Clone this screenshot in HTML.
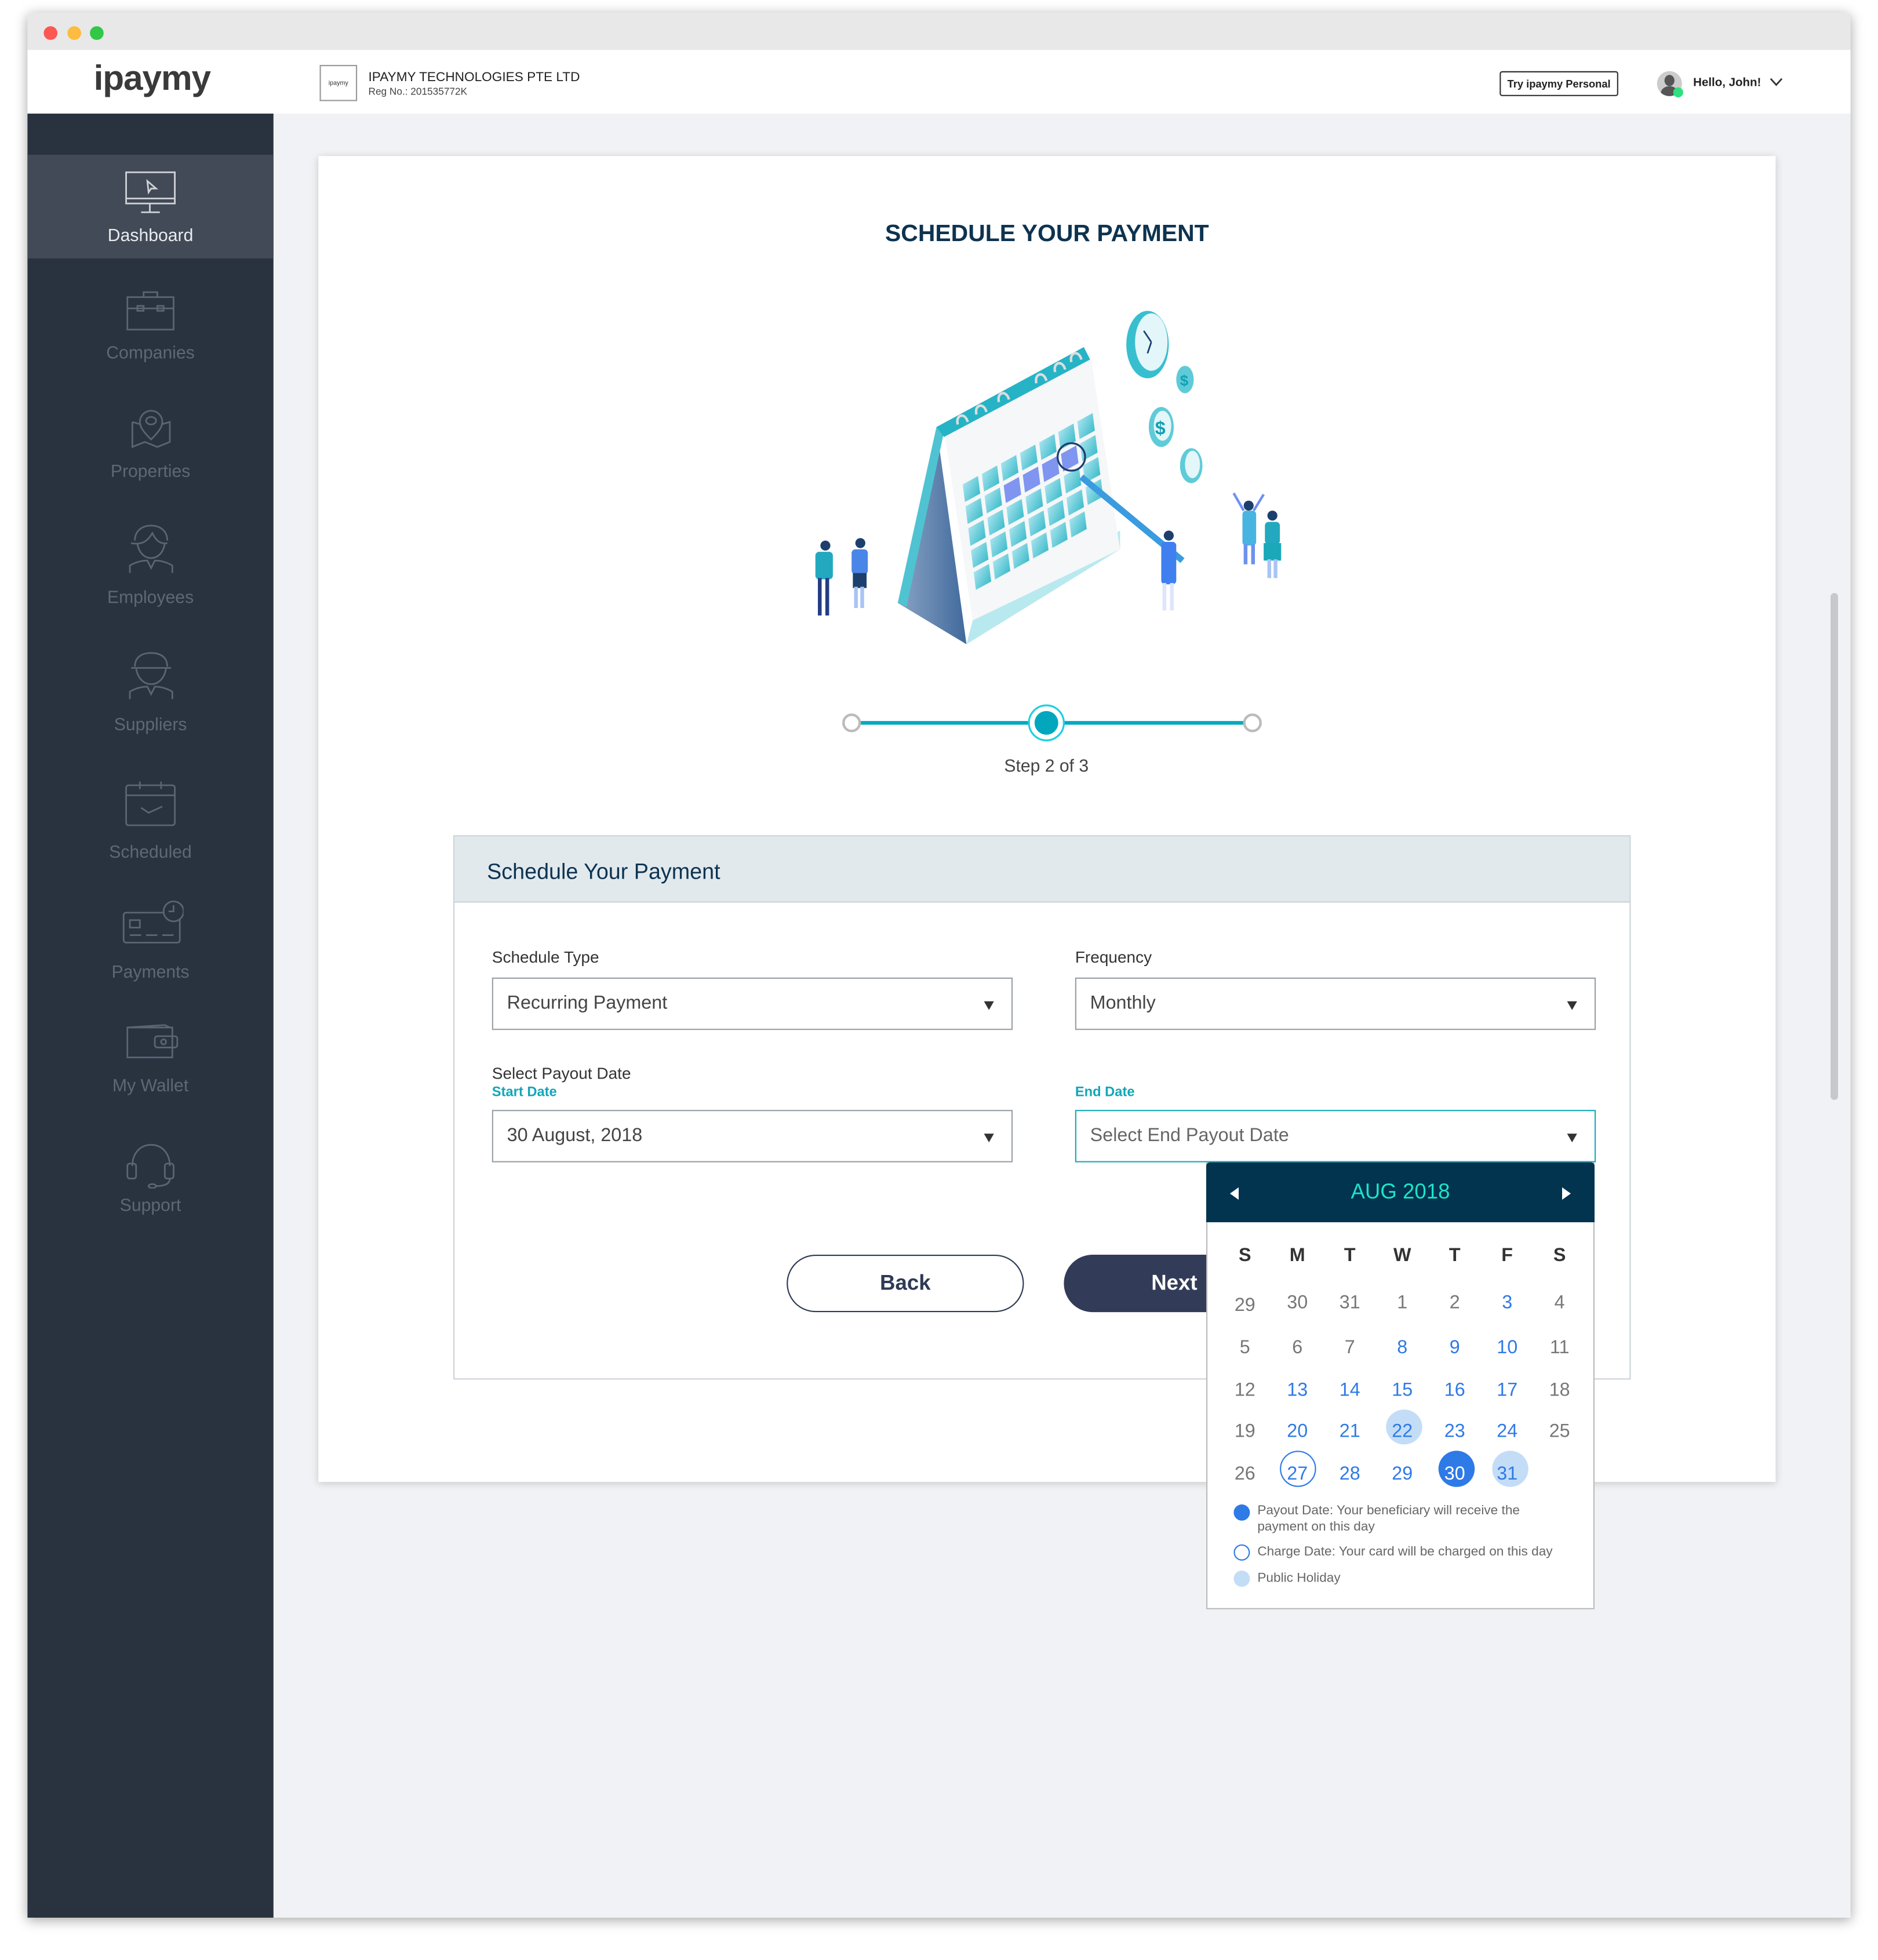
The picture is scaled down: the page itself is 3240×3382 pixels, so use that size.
<!DOCTYPE html>
<html><head><meta charset="utf-8"><style>
*{margin:0;padding:0;box-sizing:border-box}
html,body{width:3240px;height:3381px;overflow:hidden;background:#fff}
#w{position:absolute;left:0;top:0;width:1504px;height:1570px;transform:scale(2.15426);transform-origin:0 0;font-family:"Liberation Sans",sans-serif}
.a{position:absolute}
.side{position:absolute;left:22px;top:91px;width:197px;height:1445px;background:#29323f}
.it{position:absolute;left:0;width:197px;text-align:center;color:#5f6776;font-size:14px}
.it svg{position:absolute;left:78px}
.lbl{position:absolute;font-size:13px;color:#333}
.sub{position:absolute;font-size:11px;color:#12a6b8;font-weight:bold}
.sel{position:absolute;height:42px;border:1px solid #9aa0a6;background:#fff;font-size:15px;color:#444;padding:11px 11px}
.sel:after{content:"";position:absolute;right:14px;top:18px;border-left:4px solid transparent;border-right:4px solid transparent;border-top:7px solid #333}
.cal td{width:42px;text-align:center;height:33.6px;font-size:15px;color:#777}
.cal td.b{color:#2e7ae6}
</style></head><body><div id="w">
<div class="a" style="left:22px;top:10px;width:1460px;height:1526px;box-shadow:0 2px 10px rgba(0,0,0,.35);background:#f1f2f5;border-radius:5px 5px 0 0"></div>
<div class="a" style="left:22px;top:10px;width:1460px;height:30px;background:#e8e8e8;border-radius:5px 5px 0 0"></div>
<div class="a" style="left:35px;top:21px;width:11px;height:11px;border-radius:50%;background:#fc5753"></div>
<div class="a" style="left:54px;top:21px;width:11px;height:11px;border-radius:50%;background:#fdbc40"></div>
<div class="a" style="left:72px;top:21px;width:11px;height:11px;border-radius:50%;background:#33c748"></div>
<div class="a" style="left:22px;top:40px;width:1460px;height:51px;background:#fff"></div>
<div class="a" style="left:75px;top:47px;font-size:28px;font-weight:bold;color:#3a3a3a;letter-spacing:-.5px">ipaymy</div>
<div class="a" style="left:256px;top:52px;width:30px;height:29px;border:1px solid #999;font-size:5px;text-align:center;padding-top:11px;color:#333">ipaymy</div>
<div class="a" style="left:295px;top:56px;font-size:10.5px;color:#222">IPAYMY TECHNOLOGIES PTE LTD</div>
<div class="a" style="left:295px;top:69px;font-size:8px;color:#444">Reg No.: 201535772K</div>
<div class="a" style="left:1201px;top:57px;width:95px;height:20px;border:1px solid #333;border-radius:2px;font-size:8.5px;font-weight:bold;text-align:center;line-height:18px;color:#222">Try ipaymy Personal</div>
<div class="a" style="left:1327px;top:57px;width:20px;height:20px;border-radius:50%;background:#ccc;overflow:hidden"><div class="a" style="left:6px;top:3px;width:8px;height:9px;border-radius:50%;background:#555"></div><div class="a" style="left:3px;top:12px;width:14px;height:12px;border-radius:50%;background:#555"></div></div>
<div class="a" style="left:1340px;top:70px;width:8px;height:8px;border-radius:50%;background:#2ee07e"></div>
<div class="a" style="left:1356px;top:61px;font-size:9.5px;font-weight:bold;color:#222">Hello, John!</div>
<svg class="a" style="left:1417px;top:62px" width="11" height="8"><path d="M1 1l4.5 5L10 1" fill="none" stroke="#333" stroke-width="1.3"/></svg>
<div class="side">
<div class="a" style="left:0;top:33px;width:197px;height:83px;background:#424a57"></div>
<div class="it" style="top:46px"><svg style="top:0" width="42" height="36" fill="none" stroke="#cfd3d8" stroke-width="1.3"><rect x="1" y="1" width="39" height="25"/><path d="M1 22h39M20 26v7M13 33h15M18 8l1 9 2-3 4 0z"/></svg><div style="position:absolute;top:43px;width:197px;color:#e8eaee;font-size:14px">Dashboard</div></div>
<div class="it" style="top:141px"><svg style="top:0" width="42" height="34" fill="none" stroke="#5c6473" stroke-width="1.3"><rect x="2" y="6" width="37" height="26"/><path d="M15 6V2h11v4M2 15h37"/><rect x="10" y="13" width="5" height="4"/><rect x="26" y="13" width="5" height="4"/></svg><div style="position:absolute;top:42px;width:197px">Companies</div></div>
<div class="it" style="top:234px"><svg style="top:0" width="42" height="36" fill="none" stroke="#5c6473" stroke-width="1.3"><path d="M6 13v20l10-4 10 4 10-4V13l-7 2M6 13l7 2"/><path d="M21 27c-6-6-9-10-9-14a9 9 0 0118 0c0 4-3 8-9 14z"/><ellipse cx="21" cy="12" rx="4" ry="3"/></svg><div style="position:absolute;top:44px;width:197px">Properties</div></div>
<div class="it" style="top:328px"><svg style="top:0" width="42" height="40" fill="none" stroke="#5c6473" stroke-width="1.3"><path d="M8 14c0-8 6-12 13-12s13 4 13 12M5 16c10 2 14-3 17-8 3 6 6 9 12 8"/><path d="M10 16c1 8 6 12 11 12s10-4 11-12M4 40v-6c5-3 10-4 14-4l3 6 3-6c4 0 9 1 14 4v6"/></svg><div style="position:absolute;top:51px;width:197px">Employees</div></div>
<div class="it" style="top:429px"><svg style="top:0" width="42" height="40" fill="none" stroke="#5c6473" stroke-width="1.3"><path d="M8 14c0-8 6-11 13-11s13 3 13 11M5 15h32M9 15c1 8 6 13 12 13s11-5 12-13M4 40v-6c5-3 10-4 14-4l3 6 3-6c4 0 9 1 14 4v6"/></svg><div style="position:absolute;top:52px;width:197px">Suppliers</div></div>
<div class="it" style="top:534px"><svg style="top:0" width="42" height="38" fill="none" stroke="#5c6473" stroke-width="1.3"><rect x="1" y="4" width="39" height="32" rx="2"/><path d="M1 12h39M12 1v6M29 1v6M13 22l6 4 11-5"/></svg><div style="position:absolute;top:49px;width:197px">Scheduled</div></div>
<div class="it" style="top:630px"><svg style="top:0;left:75px" width="50" height="38" fill="none" stroke="#5c6473" stroke-width="1.3"><rect x="2" y="10" width="45" height="24" rx="2"/><rect x="7" y="16" width="8" height="6"/><path d="M7 28h9M20 28h9M33 28h9"/><circle cx="42" cy="9" r="8" fill="#29323f"/><path d="M42 4v5h-4"/></svg><div style="position:absolute;top:49px;width:197px">Payments</div></div>
<div class="it" style="top:728px"><svg style="top:0" width="44" height="30" fill="none" stroke="#5c6473" stroke-width="1.3"><path d="M2 4h36v24H2zM2 4l30-2 4 2"/><rect x="24" y="11" width="18" height="9" rx="2"/><circle cx="31" cy="15.5" r="2"/></svg><div style="position:absolute;top:42px;width:197px">My Wallet</div></div>
<div class="it" style="top:823px"><svg style="top:0" width="42" height="38" fill="none" stroke="#5c6473" stroke-width="1.3"><path d="M6 20C6 10 12 3 21 3s15 7 15 17"/><rect x="2" y="18" width="7" height="12" rx="2"/><rect x="32" y="18" width="7" height="12" rx="2"/><path d="M36 30c0 5-6 6-11 6"/><ellipse cx="22" cy="36" rx="3" ry="1.6"/></svg><div style="position:absolute;top:43px;width:197px">Support</div></div>
</div>
<div class="a" style="left:1466px;top:475px;width:6px;height:406px;border-radius:3px;background:#c6c8cc"></div>
<div class="a" style="left:255px;top:125px;width:1167px;height:1062px;background:#fff;box-shadow:0 1px 6px rgba(0,0,0,.18)"></div>
<div class="a" style="left:255px;top:177px;width:1167px;text-align:center;font-size:19px;font-weight:bold;color:#0d3350">SCHEDULE YOUR PAYMENT</div>
<svg class="a" style="left:0;top:0" width="1504" height="620">
<defs><linearGradient id="g1" x1="0" y1="0" x2="1" y2="1"><stop offset="0" stop-color="#a6e3ee"/><stop offset="1" stop-color="#3fbcca"/></linearGradient><linearGradient id="g2" x1="0" y1="0" x2="1" y2="0"><stop offset="0" stop-color="#8aa4c4"/><stop offset="1" stop-color="#40699c"/></linearGradient></defs>
<polygon points="719,483 750,342 774,516" fill="url(#g2)"/>
<polygon points="719,483 750,342 756,346 726,486" fill="#4fc3d2"/>
<polygon points="774,516 897,440 897,425 779,497" fill="#b8e9ef"/>
<polygon points="756,344 873,282 897,440 779,497" fill="#f5f7f8"/>
<polygon points="750,342 868,278 873,288 756,350" fill="#26b3c6"/>
<g transform="matrix(15.3,-8.4,2.2,17.6,771,388)" fill="url(#g1)">
<rect x="0" y="0" width=".8" height=".8"/><rect x="1" y="0" width=".8" height=".8"/><rect x="2" y="0" width=".8" height=".8"/><rect x="3" y="0" width=".8" height=".8"/><rect x="4" y="0" width=".8" height=".8"/><rect x="5" y="0" width=".8" height=".8"/><rect x="6" y="0" width=".8" height=".8"/>
<rect x="0" y="1" width=".8" height=".8"/><rect x="1" y="1" width=".8" height=".8"/><rect x="2" y="1" width=".8" height=".8" fill="#7f95f0"/><rect x="3" y="1" width=".8" height=".8" fill="#7f95f0"/><rect x="4" y="1" width=".8" height=".8" fill="#7f95f0"/><rect x="5" y="1" width=".8" height=".8" fill="#7f95f0"/><rect x="6" y="1" width=".8" height=".8"/>
<rect x="0" y="2" width=".8" height=".8"/><rect x="1" y="2" width=".8" height=".8"/><rect x="2" y="2" width=".8" height=".8"/><rect x="3" y="2" width=".8" height=".8"/><rect x="4" y="2" width=".8" height=".8"/><rect x="5" y="2" width=".8" height=".8"/><rect x="6" y="2" width=".8" height=".8"/>
<rect x="0" y="3" width=".8" height=".8"/><rect x="1" y="3" width=".8" height=".8"/><rect x="2" y="3" width=".8" height=".8"/><rect x="3" y="3" width=".8" height=".8"/><rect x="4" y="3" width=".8" height=".8"/><rect x="5" y="3" width=".8" height=".8"/><rect x="6" y="3" width=".8" height=".8"/>
<rect x="0" y="4" width=".8" height=".8"/><rect x="1" y="4" width=".8" height=".8"/><rect x="2" y="4" width=".8" height=".8"/><rect x="3" y="4" width=".8" height=".8"/><rect x="4" y="4" width=".8" height=".8"/><rect x="5" y="4" width=".8" height=".8"/>
</g>
<g fill="none" stroke="#ddd" stroke-width="2"><path d="M767 340c-2-8 6-10 8-2"/><path d="M782 332c-2-8 6-10 8-2"/><path d="M800 322c-2-8 6-10 8-2"/><path d="M830 307c-2-8 6-10 8-2"/><path d="M845 298c-2-8 6-10 8-2"/><path d="M858 290c-2-8 6-10 8-2"/></g>
<circle cx="858" cy="366" r="11" fill="none" stroke="#1d3f6e" stroke-width="1.5"/>
<path d="M866 382L947 449" stroke="#3a9be0" stroke-width="5"/>
<ellipse cx="919" cy="276" rx="17" ry="27" fill="#38bfcf"/><ellipse cx="922" cy="274" rx="13" ry="23" fill="#e3f6f9"/><path d="M922 274l-6-9M922 274l-3 9" stroke="#1d3f6e" stroke-width="1.3"/>
<ellipse cx="949" cy="304" rx="7" ry="11" fill="#5fcbd8"/><text x="945" y="309" font-size="12" fill="#13a0b4" font-weight="bold">$</text>
<ellipse cx="930" cy="342" rx="10" ry="16" fill="#5fcbd8"/><ellipse cx="931" cy="341" rx="7" ry="12" fill="#e3f6f9"/><text x="925" y="348" font-size="15" fill="#13a0b4" font-weight="bold">$</text>
<ellipse cx="954" cy="373" rx="9" ry="14" fill="#5fcbd8"/><ellipse cx="955" cy="372" rx="6" ry="11" fill="#e3f6f9"/>
<g fill="#22a9bf"><circle cx="661" cy="437" r="4" fill="#1d3f6e"/><rect x="653" y="442" width="14" height="22" rx="3"/><rect x="655" y="463" width="3" height="30" fill="#233c85"/><rect x="661" y="463" width="3" height="30" fill="#233c85"/>
<circle cx="689" cy="435" r="4" fill="#1d3f6e"/><rect x="682" y="440" width="13" height="20" rx="3" fill="#4a86e8"/><rect x="683" y="459" width="11" height="12" fill="#1d3f6e"/><rect x="684" y="470" width="3" height="17" fill="#a9c4f5"/><rect x="689" y="470" width="3" height="17" fill="#a9c4f5"/>
<circle cx="936" cy="429" r="4" fill="#1d3f6e"/><rect x="930" y="434" width="12" height="34" rx="3" fill="#3f7fef"/><rect x="931" y="467" width="3" height="22" fill="#dde6fb"/><rect x="937" y="467" width="3" height="22" fill="#dde6fb"/>
<circle cx="1000" cy="405" r="4" fill="#1d3f6e"/><path d="M988 395l8 14M1012 396l-8 13" stroke="#6e90f0" stroke-width="2"/><rect x="995" y="409" width="11" height="28" rx="3" fill="#4ab4e0"/><rect x="996" y="436" width="3" height="16" fill="#6e90f0"/><rect x="1002" y="436" width="3" height="16" fill="#6e90f0"/>
<circle cx="1019" cy="413" r="4" fill="#1d3f6e"/><rect x="1013" y="418" width="12" height="18" rx="3"/><rect x="1012" y="435" width="14" height="14" fill="#1ba8b8"/><rect x="1015" y="448" width="3" height="15" fill="#a9c4f5"/><rect x="1020" y="448" width="3" height="15" fill="#a9c4f5"/></g>
<line x1="682" y1="579" x2="1003" y2="579" stroke="#04a9bf" stroke-width="3"/>
<circle cx="682" cy="579" r="6.5" fill="#fff" stroke="#bbb" stroke-width="2"/>
<circle cx="1003" cy="579" r="6.5" fill="#fff" stroke="#bbb" stroke-width="2"/>
<circle cx="838" cy="579" r="14" fill="#fff" stroke="#1fd0e0" stroke-width="1.5"/>
<circle cx="838" cy="579" r="9.5" fill="#03a7bd"/>
</svg>
<div class="a" style="left:780px;top:605px;width:116px;text-align:center;font-size:14px;color:#444">Step 2 of 3</div>
<div class="a" style="left:363px;top:669px;width:943px;height:436px;border:1px solid #ccd3d8;background:#fff"></div>
<div class="a" style="left:364px;top:670px;width:941px;height:53px;background:#e1e9ed;border-bottom:1px solid #c8d2d8"></div>
<div class="a" style="left:390px;top:688px;font-size:17.5px;color:#0d3350">Schedule Your Payment</div>
<div class="lbl" style="left:394px;top:759px">Schedule Type</div>
<div class="sel" style="left:394px;top:783px;width:417px">Recurring Payment</div>
<div class="lbl" style="left:861px;top:759px">Frequency</div>
<div class="sel" style="left:861px;top:783px;width:417px">Monthly</div>
<div class="lbl" style="left:394px;top:852px">Select Payout Date</div>
<div class="sub" style="left:394px;top:869px">Start Date</div>
<div class="sel" style="left:394px;top:889px;width:417px">30 August, 2018</div>
<div class="sub" style="left:861px;top:869px">End Date</div>
<div class="sel" style="left:861px;top:889px;width:417px;border-color:#1aa9bb;color:#666">Select End Payout Date</div>
<div class="a" style="left:630px;top:1005px;width:190px;height:46px;border:1.5px solid #2f3a56;border-radius:23px;text-align:center;line-height:43px;font-size:17px;font-weight:bold;color:#2f3a56">Back</div>
<div class="a" style="left:852px;top:1005px;width:190px;height:46px;background:#323c58;border-radius:23px;text-align:left;padding-left:70px;line-height:46px;font-size:17px;font-weight:bold;color:#fff">Next</div>
<div class="a" style="left:966px;top:931px;width:311px;height:358px;background:#fff;border:1px solid #bbb"></div>
<div class="a" style="left:966px;top:931px;width:311px;height:48px;background:#02334f;border-radius:3px 3px 0 0"></div>
<div class="a" style="left:966px;top:945px;width:311px;text-align:center;font-size:17px;color:#1de3c8">AUG 2018</div>
<svg class="a" style="left:985px;top:951px" width="8" height="10"><path d="M7 0v10L0 5z" fill="#fff"/></svg>
<svg class="a" style="left:1251px;top:951px" width="8" height="10"><path d="M0 0v10l7-5z" fill="#fff"/></svg>
<div class="a" style="left:1110px;top:1129px;width:29px;height:28px;border-radius:50%;background:#c4ddf7"></div>
<div class="a" style="left:1025px;top:1162px;width:29px;height:29px;border-radius:50%;border:1.5px solid #2e7ae6"></div>
<div class="a" style="left:1152px;top:1162px;width:29px;height:29px;border-radius:50%;background:#2e7ae6"></div>
<div class="a" style="left:1195px;top:1162px;width:29px;height:29px;border-radius:50%;background:#c4ddf7"></div>
<table class="a cal" style="left:976px;top:987px;border-collapse:collapse">
<tr><td style="color:#333;font-weight:bold;height:36px">S</td><td style="color:#333;font-weight:bold">M</td><td style="color:#333;font-weight:bold">T</td><td style="color:#333;font-weight:bold">W</td><td style="color:#333;font-weight:bold">T</td><td style="color:#333;font-weight:bold">F</td><td style="color:#333;font-weight:bold">S</td></tr>
<tr><td style="height:40px;padding-top:4px">29</td><td>30</td><td>31</td><td>1</td><td>2</td><td class="b">3</td><td>4</td></tr>
<tr><td>5</td><td>6</td><td>7</td><td class="b">8</td><td class="b">9</td><td class="b">10</td><td>11</td></tr>
<tr><td>12</td><td class="b">13</td><td class="b">14</td><td class="b">15</td><td class="b">16</td><td class="b">17</td><td>18</td></tr>
<tr><td>19</td><td class="b">20</td><td class="b">21</td><td class="b">22</td><td class="b">23</td><td class="b">24</td><td>25</td></tr>
<tr><td>26</td><td class="b">27</td><td class="b">28</td><td class="b">29</td><td style="color:#fff">30</td><td class="b">31</td><td></td></tr>
</table>
<div class="a" style="left:988px;top:1205px;width:13px;height:13px;border-radius:50%;background:#2e7ae6"></div>
<div class="a" style="left:1007px;top:1204px;font-size:10.5px;color:#666;line-height:13px;width:235px">Payout Date: Your beneficiary will receive the payment on this day</div>
<div class="a" style="left:988px;top:1237px;width:13px;height:13px;border-radius:50%;border:1px solid #2e7ae6"></div>
<div class="a" style="left:1007px;top:1237px;font-size:10.5px;color:#666">Charge Date: Your card will be charged on this day</div>
<div class="a" style="left:988px;top:1258px;width:13px;height:13px;border-radius:50%;background:#c4ddf7"></div>
<div class="a" style="left:1007px;top:1258px;font-size:10.5px;color:#666">Public Holiday</div>
</div></body></html>
